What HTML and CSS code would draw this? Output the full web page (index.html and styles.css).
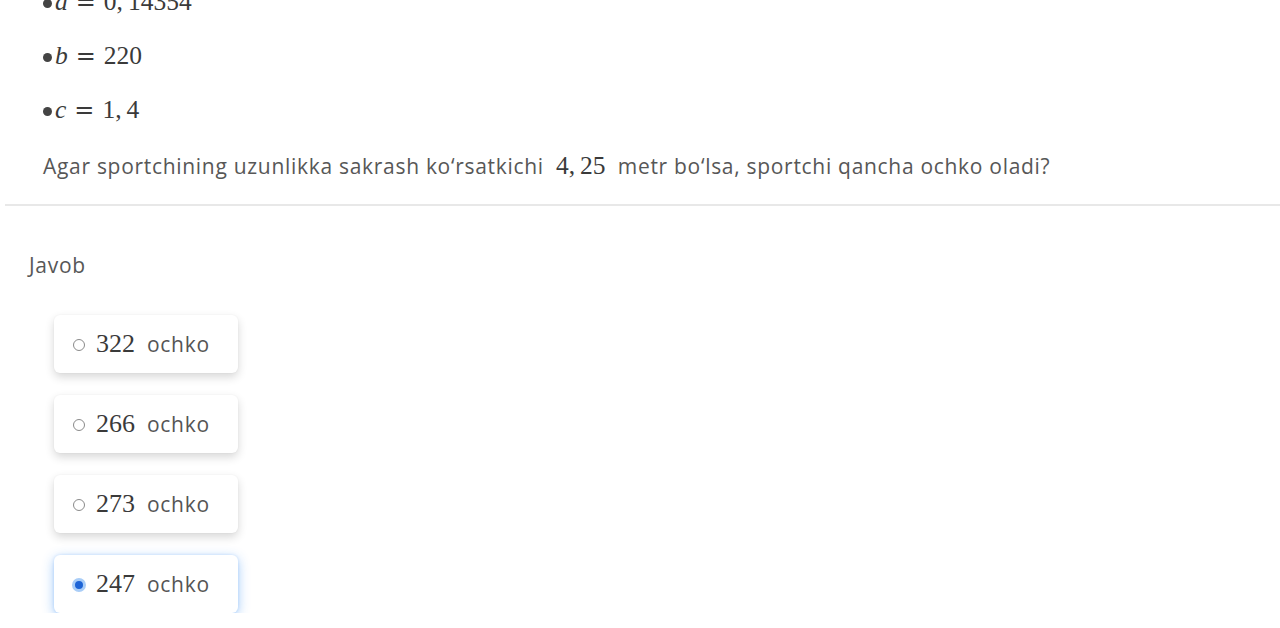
FILE: index.html
```html
<!DOCTYPE html>
<html lang="uz">
<head>
<meta charset="utf-8">
<title>Javob</title>
<link rel="stylesheet" href="styles.css">
</head>
<body>
<div class="page">
  <section class="question">
    <div class="math-row"><span class="bullet"></span><span class="m"><i>a</i><span class="eq">=</span>0,<span class="sp"></span>14354</span></div>
    <div class="math-row"><span class="bullet"></span><span class="m"><i>b</i><span class="eq">=</span>220</span></div>
    <div class="math-row"><span class="bullet"></span><span class="m"><i>c</i><span class="eq">=</span>1,<span class="sp"></span>4</span></div>
    <div class="text-row">Agar sportchining uzunlikka sakrash ko‘rsatkichi <span class="m inline">4,<span class="sp"></span>25</span> metr bo‘lsa, sportchi qancha ochko oladi?</div>
  </section>
  <hr class="divider">
  <section class="answer">
    <div class="label">Javob</div>
    <div class="options">
      <label class="option"><span class="radio"></span><span class="m num">322</span><span class="unit">ochko</span></label>
      <label class="option"><span class="radio"></span><span class="m num">266</span><span class="unit">ochko</span></label>
      <label class="option"><span class="radio"></span><span class="m num">273</span><span class="unit">ochko</span></label>
      <label class="option selected"><span class="radio"></span><span class="m num">247</span><span class="unit">ochko</span></label>
    </div>
  </section>
</div>
</body>
</html>
```
FILE: styles.css
```css
html, body {
  margin: 0;
  padding: 0;
  background: #ffffff;
}
body {
  font-family: "Open Sans", "Noto Sans", sans-serif;
  color: #555555;
  overflow: hidden;
}
.page {
  width: 1280px;
}
.question {
  margin-top: -25px;
  padding-left: 43px;
}
.math-row, .text-row {
  height: 54px;
  box-sizing: border-box;
  display: flex;
  align-items: center;
}
.text-row {
  padding-top: 3px;
  font-size: 21px;
  letter-spacing: 0.7px;
  color: #575757;
  white-space: pre-wrap;
}
.m {
  font-family: "Liberation Serif", "DejaVu Serif", serif;
  color: #3a3a3a;
  font-size: 25.5px;
  letter-spacing: 0;
}
.m i {
  font-style: italic;
}
.m.inline {
  margin: 0 6px;
}
.bullet {
  display: inline-block;
  width: 9px;
  height: 9px;
  border-radius: 50%;
  background: #444444;
  margin-right: 3px;
  margin-top: 2px;
}
.eq {
  font-family: "DejaVu Serif", serif;
  font-size: 24px;
  margin: 0 8px;
}
.sp {
  display: inline-block;
  width: 5px;
}
.divider {
  margin: 13px 0 0 5px;
  border: 0;
  height: 2px;
  background: #e8e8e8;
}
.answer {
  padding-left: 29px;
}
.label {
  margin-top: 47px;
  font-size: 21px;
  letter-spacing: 0.7px;
  color: #575757;
  line-height: 24px;
}
.options {
  margin-top: 38px;
  padding-left: 25px;
  display: flex;
  flex-direction: column;
  gap: 22px;
  align-items: flex-start;
}
.option {
  width: 184px;
  height: 58px;
  box-sizing: border-box;
  border-radius: 6px;
  background: #ffffff;
  box-shadow: 0 4px 10px rgba(0, 0, 0, 0.16), 0 0 2px rgba(0, 0, 0, 0.05);
  display: flex;
  align-items: center;
  padding-left: 19px;
}
.option.selected {
  box-shadow: 0 3px 12px rgba(50, 140, 245, 0.45), 0 0 3px rgba(50, 140, 245, 0.2);
}
.radio {
  width: 10px;
  height: 10px;
  border-radius: 50%;
  border: 1.3px solid #8a8a8a;
  margin-right: 11px;
  margin-top: 2px;
}
.selected .radio {
  box-sizing: border-box;
  width: 14px;
  height: 14px;
  border: 3px solid #a9cdf7;
  background: #1d64d6;
  margin-left: -1px;
  margin-right: 10px;
}
.num {
  font-size: 26px;
}
.unit {
  font-size: 21px;
  letter-spacing: 0.7px;
  color: #555555;
  margin-left: 12px;
}
```
